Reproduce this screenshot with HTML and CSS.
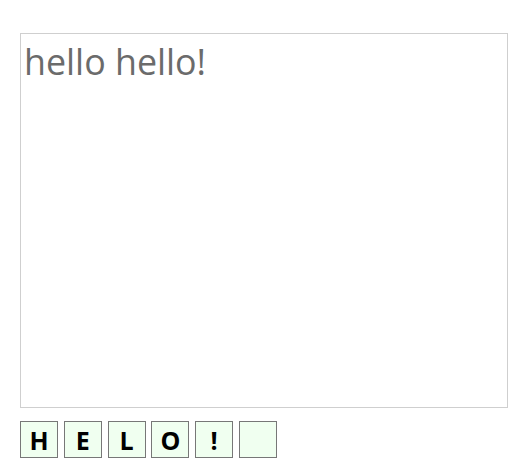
FILE: index.html
```html
<!DOCTYPE html>
<html>
<head>
<meta charset="utf-8">
<link rel="stylesheet" href="styles.css">
</head>
<body>
<div class="page">
  <div class="editor">hello hello!</div>
  <div class="tiles">
    <div class="tile">H</div>
    <div class="tile">E</div>
    <div class="tile">L</div>
    <div class="tile">O</div>
    <div class="tile">!</div>
    <div class="tile"></div>
  </div>
</div>
</body>
</html>
```
FILE: styles.css
```css
html, body {
  margin: 0;
  padding: 0;
  background: #fff;
}
.page {
  padding: 33px 0 0 20px;
}
.editor {
  box-sizing: border-box;
  width: 488px;
  height: 375px;
  border: 1px solid #cfcfcf;
  padding: 3px 3px 2px;
  font-family: "Open Sans", sans-serif;
  font-size: 35.8px;
  line-height: 48px;
  color: #6b6b6b;
}
.tiles {
  display: flex;
  gap: 5.8px;
  margin-top: 13px;
}
.tile {
  box-sizing: border-box;
  width: 38px;
  height: 37px;
  border: 1px solid #777;
  background: #f0fff0;
  font-family: "Open Sans", sans-serif;
  font-weight: 700;
  font-size: 25px;
  color: #000;
  display: flex;
  align-items: center;
  justify-content: center;
}
```
